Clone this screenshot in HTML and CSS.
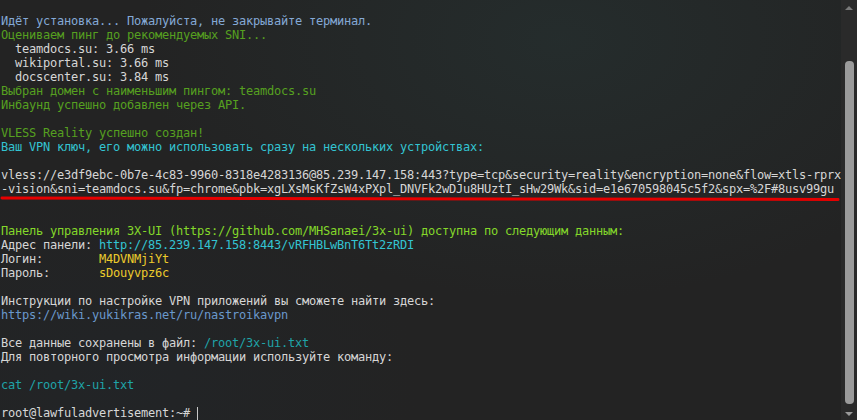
FILE: index.html
```html
<!DOCTYPE html>
<html lang="ru">
<head>
<meta charset="utf-8">
<title>Terminal</title>
<link rel="stylesheet" href="styles.css">
</head>
<body>
<div class="window">
  <div class="term">
    <div class="ln blue">Идёт установка... Пожалуйста, не закрывайте терминал.</div>
    <div class="ln green">Оцениваем пинг до рекомендуемых SNI...</div>
    <div class="ln">  teamdocs.su: 3.66 ms</div>
    <div class="ln">  wikiportal.su: 3.66 ms</div>
    <div class="ln">  docscenter.su: 3.84 ms</div>
    <div class="ln green">Выбран домен с наименьшим пингом: teamdocs.su</div>
    <div class="ln green">Инбаунд успешно добавлен через API.</div>
    <div class="ln"></div>
    <div class="ln green">VLESS Reality успешно создан!</div>
    <div class="ln cyan">Ваш VPN ключ, его можно использовать сразу на нескольких устройствах:</div>
    <div class="ln"></div>
    <div class="ln">vless://e3df9ebc-0b7e-4c83-9960-8318e4283136@85.239.147.158:443?type=tcp&amp;security=reality&amp;encryption=none&amp;flow=xtls-rprx</div>
    <div class="ln">-vision&amp;sni=teamdocs.su&amp;fp=chrome&amp;pbk=xgLXsMsKfZsW4xPXpl_DNVFk2wDJu8HUztI_sHw29Wk&amp;sid=e1e670598045c5f2&amp;spx=%2F#8usv99gu</div>
    <div class="ln"></div>
    <div class="ln"></div>
    <div class="ln lime">Панель управления 3X-UI (https://github.com/MHSanaei/3x-ui) доступна по следующим данным:</div>
    <div class="ln">Адрес панели: <span class="cyan">http://85.239.147.158:8443/vRFHBLwBnT6Tt2zRDI</span></div>
    <div class="ln">Логин:        <span class="yellow">M4DVNMjiYt</span></div>
    <div class="ln">Пароль:       <span class="yellow">sDouyvpz6c</span></div>
    <div class="ln"></div>
    <div class="ln">Инструкции по настройке VPN приложений вы сможете найти здесь:</div>
    <div class="ln link">https://wiki.yukikras.net/ru/nastroikavpn</div>
    <div class="ln"></div>
    <div class="ln">Все данные сохранены в файл: <span class="teal">/root/3x-ui.txt</span></div>
    <div class="ln">Для повторного просмотра информации используйте команду:</div>
    <div class="ln"></div>
    <div class="ln teal">cat /root/3x-ui.txt</div>
    <div class="ln"></div>
    <div class="ln">root@lawfuladvertisement:~# <span class="cursor"></span></div>
    <svg class="mark" width="842" height="8" viewBox="0 0 842 8"><line x1="2" y1="3" x2="838" y2="4.5" stroke="#e50000" stroke-width="3" stroke-linecap="round"/></svg>
  </div>
  <div class="scrollbar">
    <div class="arrow up"></div>
    <div class="thumb"></div>
    <div class="arrow down"></div>
  </div>
</div>
</body>
</html>
```

FILE: styles.css
```css
html, body {
  margin: 0;
  padding: 0;
  width: 857px;
  height: 420px;
  overflow: hidden;
  background: #242424;
}

.window {
  display: flex;
  width: 857px;
  height: 420px;
  background:
    radial-gradient(ellipse 420px 260px at 560px 40px, rgba(40, 62, 62, 0.35), rgba(40, 62, 62, 0) 100%),
    radial-gradient(ellipse 300px 200px at 120px 380px, rgba(30, 40, 50, 0.25), rgba(30, 40, 50, 0) 100%),
    #232323;
}

.term {
  position: relative;
  flex: 1;
  padding: 14px 0 0 1px;
  font-family: "DejaVu Sans Mono", "Liberation Mono", monospace;
  font-size: 12px;
  letter-spacing: -0.224px;
  color: #d6d6d6;
  overflow: hidden;
}

.ln {
  height: 14px;
  line-height: 14px;
  white-space: pre;
}

.blue { color: #84a9d6; }
.green { color: #56a020; }
.lime { color: #84d82a; }
.cyan { color: #33c4d2; }
.yellow { color: #eccb2c; }
.link { color: #6a98cc; }
.teal { color: #1fa3a8; }

.cursor {
  display: inline-block;
  width: 1px;
  height: 14px;
  background: #c8c8c8;
  vertical-align: top;
  margin-top: 1px;
}

.mark {
  position: absolute;
  left: 0;
  top: 195px;
}

.scrollbar {
  width: 16px;
  flex: none;
  display: flex;
  flex-direction: column;
  align-items: center;
  background: #2a2a2a;
  padding: 6px 0 4px;
  box-sizing: border-box;
}

.arrow {
  width: 0;
  height: 0;
  border-left: 4px solid transparent;
  border-right: 4px solid transparent;
}

.arrow.up {
  border-bottom: 4px solid #7a7a7a;
}

.arrow.down {
  border-top: 4px solid #9a9a9a;
}

.thumb {
  width: 9px;
  margin: 51px 0 8px;
  flex: 1;
  background: #9b9b9b;
  border-radius: 4px;
}
```
